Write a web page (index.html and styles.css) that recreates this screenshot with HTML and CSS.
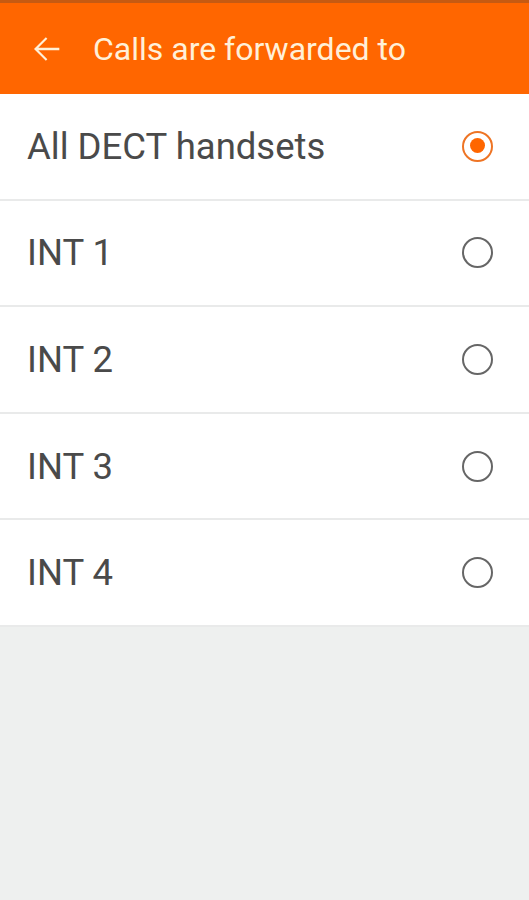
FILE: index.html
```html
<!DOCTYPE html>
<html lang="en">
  <head>
    <meta charset="UTF-8">
    <meta name="viewport" content="width=device-width, initial-scale=1.0">
    <title>Calls are forwarded to</title>
    <link rel="stylesheet" href="styles.css">
  </head>
  <body>
    <header class="toolbar">
      <button class="back-btn" aria-label="Back">
        <svg width="40" height="40" viewBox="0 0 24 24">
          <path d="M20 11.2H7.4l5.4-5.4L11.9 4.9 4.8 12l7.1 7.1.9-.9-5.4-5.4H20v-1.6z" fill="#fff0d8"/>
        </svg>
      </button>
      <h1>Calls are forwarded to</h1>
    </header>
    <ul class="option-list">
      <li class="option">
        <span>All DECT handsets</span>
        <span class="radio checked"></span>
      </li>
      <li class="option">
        <span>INT 1</span>
        <span class="radio"></span>
      </li>
      <li class="option">
        <span>INT 2</span>
        <span class="radio"></span>
      </li>
      <li class="option">
        <span>INT 3</span>
        <span class="radio"></span>
      </li>
      <li class="option">
        <span>INT 4</span>
        <span class="radio"></span>
      </li>
    </ul>
  </body>
</html>
```

FILE: styles.css
```css
/* Tela de encaminhamento de chamadas */
body {
    margin: 0;
    font-family: Roboto, 'Noto Sans', Arial, sans-serif;
    background-color: #eef0ef;
    color: #444;
}

.toolbar {
    display: flex;
    align-items: center;
    height: 91px;
    border-top: 3px solid #c65a12;
    background-color: #ff6600;
    padding: 0 0 0 26px;
}

.back-btn {
    display: flex;
    align-items: center;
    background: none;
    border: none;
    padding: 0;
    margin-right: 27px;
}

.toolbar h1 {
    margin: 0;
    font-size: 32px;
    font-weight: 400;
    color: #fff0d8;
}

/* Lista de opções */
.option-list {
    list-style: none;
    margin: 0;
    padding: 0;
    background: #fff;
}

.option {
    display: flex;
    align-items: center;
    justify-content: space-between;
    height: 104.6px;
    padding: 0 36px 0 27px;
    border-bottom: 2px solid #e9eaea;
    font-size: 36.5px;
    color: #4a4a4a;
}

.radio {
    width: 31px;
    height: 31px;
    border: 2.5px solid #666;
    border-radius: 50%;
    box-sizing: border-box;
    position: relative;
}

.radio.checked {
    border-color: #ee7424;
}

.radio.checked::after {
    content: '';
    position: absolute;
    top: 5.5px;
    left: 5.5px;
    width: 15px;
    height: 15px;
    border-radius: 50%;
    background: #ff6600;
}
```
